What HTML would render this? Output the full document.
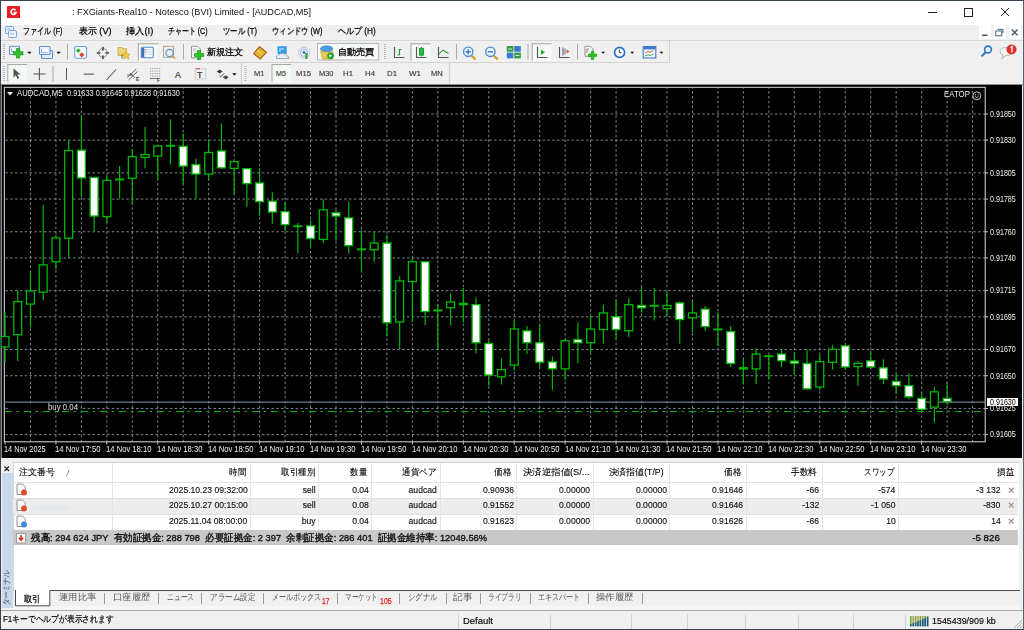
<!DOCTYPE html>
<html><head><meta charset="utf-8"><style>
html,body{margin:0;padding:0;}
body{width:1024px;height:630px;overflow:hidden;position:relative;font-family:"Liberation Sans",sans-serif;background:#f0f0f0}
.t{position:absolute;white-space:nowrap;transform-origin:left center}
</style></head><body>
<div style="position:absolute;left:0px;top:0px;width:1024px;height:630px;background:#f0f0f0"></div><div style="position:absolute;left:0px;top:0px;width:1024px;height:24.5px;background:#fff"></div><svg style="position:absolute;left:7px;top:6px" width="13" height="12"><rect x="0" y="0" width="13" height="12.5" rx="1" fill="#ea1c24"/><path d="M8.6 4.2 A2.6 2.6 0 1 0 9.1 6.6 L6.6 6.6" fill="none" stroke="#fff" stroke-width="1.6"/></svg><div class="t" style="left:72.20px;top:7.40px;font-size:9.8px;line-height:9.8px;color:#111;transform:scaleX(0.932);">: FXGiants-Real10 - Notesco (BVI) Limited - [AUDCAD,M5]</div><div style="position:absolute;left:928px;top:12px;width:9px;height:1px;background:#222"></div><div style="position:absolute;left:964px;top:8px;width:8.5px;height:8.5px;border:1px solid #222;box-sizing:border-box"></div><svg style="position:absolute;left:0;top:0" width="1024" height="30"><path d="M1001 8 L1009 16 M1009 8 L1001 16" stroke="#222" stroke-width="1"/></svg><svg style="position:absolute;left:4px;top:25px" width="14" height="14"><rect x="1.5" y="1.5" width="8" height="7" rx="1" fill="#e4eefa" stroke="#74a6e0"/><rect x="4.5" y="5.5" width="8" height="7" rx="1" fill="#eef4fc" stroke="#74a6e0"/><path d="M3 4h3 M6 9h4" stroke="#8ab4e6" stroke-width="1"/></svg><div class="t" style="left:23.40px;top:27.20px;font-size:9.2px;line-height:9.2px;color:#000;-webkit-text-stroke:0.25px #000;transform:scaleX(0.785);">ファイル (F)</div><div class="t" style="left:78.50px;top:27.20px;font-size:9.2px;line-height:9.2px;color:#000;-webkit-text-stroke:0.25px #000;transform:scaleX(0.990);">表示 (V)</div><div class="t" style="left:126.00px;top:27.20px;font-size:9.2px;line-height:9.2px;color:#000;-webkit-text-stroke:0.25px #000;transform:scaleX(1.024);">挿入(I)</div><div class="t" style="left:168.40px;top:27.20px;font-size:9.2px;line-height:9.2px;color:#000;-webkit-text-stroke:0.25px #000;transform:scaleX(0.772);">チャート (C)</div><div class="t" style="left:222.80px;top:27.20px;font-size:9.2px;line-height:9.2px;color:#000;-webkit-text-stroke:0.25px #000;transform:scaleX(0.823);">ツール (T)</div><div class="t" style="left:272.00px;top:27.20px;font-size:9.2px;line-height:9.2px;color:#000;-webkit-text-stroke:0.25px #000;transform:scaleX(0.808);">ウィンドウ (W)</div><div class="t" style="left:337.50px;top:27.20px;font-size:9.2px;line-height:9.2px;color:#000;-webkit-text-stroke:0.25px #000;transform:scaleX(0.891);">ヘルプ (H)</div><div style="position:absolute;left:978.6px;top:25px;width:12.8px;height:14.3px;background:#fff"></div><div style="position:absolute;left:993.6px;top:25px;width:12.8px;height:14.3px;background:#fff"></div><div style="position:absolute;left:1008.6px;top:25px;width:12.8px;height:14.3px;background:#fff"></div><svg style="position:absolute;left:975px;top:24px" width="49" height="17"><rect x="7" y="10.5" width="5.5" height="1.6" fill="#4a6070"/><rect x="20.8" y="7" width="6" height="4.8" fill="none" stroke="#4a6070" stroke-width="1"/><path d="M22.5 5.3 h5.5 v4" fill="none" stroke="#4a6070" stroke-width="1"/><path d="M36.8 5.5 L42.6 11.3 M42.6 5.5 L36.8 11.3" stroke="#4a6070" stroke-width="1.5"/></svg><div style="position:absolute;left:1px;top:40px;width:1022px;height:1px;background:#d8d8d8"></div><div style="position:absolute;left:1px;top:62px;width:669px;height:1px;background:#d4d4d4"></div><div style="position:absolute;left:1px;top:83.5px;width:1022px;height:1px;background:#8c8c8c"></div><svg style="position:absolute;left:0;top:0" width="1024" height="90" viewBox="0 0 1024 90"><rect x="669" y="41" width="1" height="21.5" fill="#d0d0d0"/><rect x="3" y="44" width="2" height="1" fill="#b8b8b8"/><rect x="3" y="46" width="2" height="1" fill="#b8b8b8"/><rect x="3" y="48" width="2" height="1" fill="#b8b8b8"/><rect x="3" y="50" width="2" height="1" fill="#b8b8b8"/><rect x="3" y="52" width="2" height="1" fill="#b8b8b8"/><rect x="3" y="54" width="2" height="1" fill="#b8b8b8"/><rect x="3" y="56" width="2" height="1" fill="#b8b8b8"/><rect x="3" y="58" width="2" height="1" fill="#b8b8b8"/><rect x="9.5" y="46.3" width="10" height="8.2" rx="1" fill="#eef4fc" stroke="#5b8fd6" stroke-width="1.1"/><path d="M11.5 48.5v3 M11.5 51.5h3" stroke="#7aa0d0" stroke-width="0.8"/><path d="M16.5 48.5h3.2v3.2h3.3v3.2h-3.3v3.2h-3.2v-3.2h-3.2v-3.2h3.2z" fill="#2cc22c" stroke="#139a13" stroke-width="0.7"/><path d="M27.2 51.7h4.2l-2.1 2.2z" fill="#000"/><rect x="41.5" y="50.5" width="11" height="8" rx="1" fill="#e6eef8" stroke="#5b8fd6" stroke-width="1.1"/><rect x="39.5" y="46.5" width="10.5" height="8" rx="1" fill="#f4f8fd" stroke="#5b8fd6" stroke-width="1.1"/><path d="M41.5 48.5v4h6" stroke="#7aa0d0" stroke-width="0.8" fill="none"/><path d="M56.6 51.7h4.2l-2.1 2.2z" fill="#000"/><rect x="67" y="44" width="1" height="15.5" fill="#a8a8a8"/><rect x="74.7" y="46.5" width="11.8" height="11.8" rx="1.5" fill="#fbfcfd" stroke="#6aa0e0" stroke-width="1.1"/><path d="M78.3 48.2l2.4 2.4-2.4 2.4-2.4-2.4z" fill="#2bb52b"/><path d="M81.8 52.2l2.6 2.6-2.6 2.6-2.6-2.6z" fill="#e24a32"/><circle cx="102.9" cy="52.9" r="4.3" fill="none" stroke="#808080" stroke-width="0.9"/><path d="M102.9 46.8v3.6 M102.9 55.4v3.6 M96.8 52.9h3.6 M105.4 52.9h3.6" stroke="#5a5a5a" stroke-width="1.9"/><path d="M118 47.5h4l1 1.2h3.5v6.8h-8.5z" fill="#ecd474" stroke="#c8a840" stroke-width="0.8"/><path d="M126 51.2l1.3 2.7 2.9.3-2.2 1.9.7 2.9-2.7-1.5-2.6 1.5.7-2.9-2.2-1.9 2.9-.3z" fill="#f2d040" stroke="#c09020" stroke-width="0.6"/><rect x="121.5" y="55" width="0.9" height="3.5" fill="#555"/><rect x="137.8" y="43.3" width="20.5" height="17.5" fill="#f5faf5"/><rect x="137.8" y="43.3" width="1" height="17.5" fill="#a0a0a0"/><rect x="137.8" y="43.3" width="20.5" height="1" fill="#a0a0a0"/><rect x="141.3" y="47.3" width="12" height="10.5" rx="1" fill="#fff" stroke="#4d86d4" stroke-width="1.1"/><rect x="141.8" y="48" width="2.5" height="9.3" fill="#3a6fc0"/><path d="M145 49.8h7.5 M145 52h7.5 M145 54.2h7.5" stroke="#b8cce8" stroke-width="0.8"/><circle cx="145.3" cy="49.8" r="0.6" fill="#e04040"/><circle cx="145.3" cy="52" r="0.6" fill="#e04040"/><rect x="163.5" y="46.3" width="10" height="11" fill="#f0f0f0" stroke="#b09a8a" stroke-width="0.9"/><circle cx="169.5" cy="53" r="3.6" fill="#e8f0fa" stroke="#5a90d0" stroke-width="1.1"/><path d="M172 55.6l3.2 3" stroke="#d8a030" stroke-width="1.6"/><rect x="183" y="44" width="1" height="15.5" fill="#a8a8a8"/><path d="M191.5 46.3h6l3 3v8.6h-9z" fill="#f8f8f8" stroke="#8a8a8a" stroke-width="0.9"/><path d="M193 49h3.5 M193 51h5" stroke="#aaa" stroke-width="0.8"/><path d="M197.6 50.5h3v3h3.1v3h-3.1v3.1h-3v-3.1h-3.1v-3h3.1z" fill="#2cc22c" stroke="#139a13" stroke-width="0.7"/><path d="M259.5 46.8l7 5.6-6.4 6.6-6.4-5.6z" fill="#e0b828" stroke="#b05a20" stroke-width="1.1"/><path d="M257.5 50.5l5 4.2" stroke="#f4e090" stroke-width="0.8"/><rect x="277.5" y="46.2" width="9.2" height="7.8" rx="1" fill="#2e9ae8"/><path d="M280 48v4 M281 49h3" stroke="#fff" stroke-width="0.9"/><path d="M276.6 58.5 q-1-3.2 2.3-3.5 q1.5-2.6 4.5-1.3 q3.3-.5 3.6 2.2 q2.2.3 1.8 2.6z" fill="#e6ecf2" stroke="#8a9cb0" stroke-width="0.8"/><circle cx="304" cy="52.8" r="5.6" fill="none" stroke="#b8cde8" stroke-width="1"/><circle cx="304" cy="52.8" r="3.6" fill="none" stroke="#98b8e0" stroke-width="1"/><circle cx="304" cy="52.4" r="1.4" fill="#3070c0"/><rect x="305.3" y="53" width="2.2" height="6" fill="#30a040"/><rect x="317.5" y="43.4" width="61.2" height="16.6" fill="#f6faf6" stroke="#b0b0b0" stroke-width="0.9"/><path d="M320.5 51.5 l6-1.2 6.5 1.2 -1 7.5 h-9.5z" fill="#e8c850" stroke="#c0a030" stroke-width="0.6"/><ellipse cx="326.6" cy="48.7" rx="6.3" ry="2.9" fill="#4a9ee0" stroke="#3a80c0" stroke-width="0.6"/><circle cx="330.6" cy="55.8" r="3.4" fill="#20a030"/><path d="M329.4 54v3.6l2.8-1.8z" fill="#fff"/><rect x="384" y="44" width="2" height="1" fill="#b8b8b8"/><rect x="384" y="46" width="2" height="1" fill="#b8b8b8"/><rect x="384" y="48" width="2" height="1" fill="#b8b8b8"/><rect x="384" y="50" width="2" height="1" fill="#b8b8b8"/><rect x="384" y="52" width="2" height="1" fill="#b8b8b8"/><rect x="384" y="54" width="2" height="1" fill="#b8b8b8"/><rect x="384" y="56" width="2" height="1" fill="#b8b8b8"/><rect x="384" y="58" width="2" height="1" fill="#b8b8b8"/><path d="M394.5 47v10.5h10" fill="none" stroke="#555" stroke-width="1.1"/><path d="M399.5 49v6 M399.5 49.5h2 M399.5 55h-2" stroke="#20a040" stroke-width="1.2" fill="none"/><rect x="410.5" y="43.3" width="20" height="17.5" fill="#f5faf5"/><rect x="410.5" y="43.3" width="1" height="17.5" fill="#a0a0a0"/><rect x="410.5" y="43.3" width="20" height="1" fill="#a0a0a0"/><path d="M416.5 47v10.5h10" fill="none" stroke="#555" stroke-width="1.1"/><rect x="419.5" y="48.2" width="4" height="7" fill="#20c040" stroke="#10902a" stroke-width="0.8"/><path d="M421.5 46.8v1.4 M421.5 55.2v1.4" stroke="#10902a" stroke-width="0.8"/><path d="M438.5 47v10.5h10" fill="none" stroke="#555" stroke-width="1.1"/><path d="M439 53.8 l4-3.6 5.5 3.2" fill="none" stroke="#30a040" stroke-width="1.1"/><rect x="456" y="44" width="1" height="15.5" fill="#a8a8a8"/><path d="M471.4 55.6l4.2 3.8" stroke="#d4a030" stroke-width="2.2"/><circle cx="468.2" cy="51.8" r="4.7" fill="#e8f2fc" stroke="#4a88d8" stroke-width="1.3"/><path d="M465.59999999999997 51.8h5.2" stroke="#3a78c8" stroke-width="1.4"/><path d="M468.2 49.2v5.2" stroke="#3a78c8" stroke-width="1.4"/><path d="M493.59999999999997 55.6l4.2 3.8" stroke="#d4a030" stroke-width="2.2"/><circle cx="490.4" cy="51.8" r="4.7" fill="#e8f2fc" stroke="#4a88d8" stroke-width="1.3"/><path d="M487.79999999999995 51.8h5.2" stroke="#3a78c8" stroke-width="1.4"/><rect x="506.8" y="46" width="6.6" height="5.8" fill="#3d9a40"/><rect x="514.2" y="46" width="6.6" height="5.8" fill="#3a7ad0"/><rect x="506.8" y="52.6" width="6.6" height="5.8" fill="#3a7ad0"/><rect x="514.2" y="52.6" width="6.6" height="5.8" fill="#3d9a40"/><path d="M508 49h4 M515.5 55.5h4" stroke="#cfe" stroke-width="0.9"/><rect x="527.5" y="44" width="1" height="15.5" fill="#a8a8a8"/><rect x="531.7" y="43.3" width="19.8" height="17.5" fill="#f5faf5"/><rect x="531.7" y="43.3" width="1" height="17.5" fill="#a0a0a0"/><rect x="531.7" y="43.3" width="19.8" height="1" fill="#a0a0a0"/><path d="M537.5 47v10.5h10" fill="none" stroke="#555" stroke-width="1.1"/><path d="M541 49.5v5.5l4-2.75z" fill="#20b040"/><path d="M559.5 47v10.5h10" fill="none" stroke="#555" stroke-width="1.1"/><path d="M563 47.5v8" stroke="#555" stroke-width="1"/><path d="M565 48.5v6" stroke="#4080d0" stroke-width="1"/><path d="M569.5 51.5l-3-2v4z" fill="#e05020"/><rect x="577" y="44" width="1" height="15.5" fill="#a8a8a8"/><path d="M585 46.3h5.5l2.5 2.5v7.5h-8z" fill="#f8f8f8" stroke="#888" stroke-width="0.9"/><path d="M587 49v4 M587 49h2" stroke="#666" stroke-width="0.8"/><path d="M591.2 51.3h2.6v2.7h2.8v2.6h-2.8v2.8h-2.6v-2.8h-2.8v-2.6h2.8z" fill="#2cc22c" stroke="#139a13" stroke-width="0.6"/><path d="M601.3 51.7h3.6l-1.8 2z" fill="#000"/><circle cx="619.6" cy="52.4" r="5.8" fill="#2870c8"/><circle cx="619.6" cy="52.4" r="4.2" fill="#f4f8fc"/><path d="M619.4 49.5v3.2h2.2" stroke="#333" stroke-width="0.8" fill="none"/><path d="M630.4 51.7h3.6l-1.8 2z" fill="#000"/><rect x="643.2" y="46.5" width="12.6" height="11.5" fill="#f0f6fc" stroke="#3a7ac8" stroke-width="1.1"/><rect x="643.7" y="47" width="11.6" height="2.4" fill="#3a7ac8"/><path d="M645 53l3-1.5 2 1 3.5-2" stroke="#d06030" stroke-width="0.9" fill="none"/><path d="M645 56l3-1.2 2 .8 3.5-1.6" stroke="#40a040" stroke-width="0.9" fill="none"/><path d="M659.6 51.7h3.6l-1.8 2z" fill="#000"/><circle cx="988" cy="49.5" r="3.4" fill="#eaf2fb" stroke="#2e74c8" stroke-width="1.6"/><path d="M985.8 52l-4.2 4.4" stroke="#2e74c8" stroke-width="2"/><path d="M1000 51.5 q0-4 6-4 q6 0 6 4 q0 4-6 4 l-4 3 1-3.4 q-3-1-3-3.6z" fill="#f4f4f4" stroke="#b0b0b0" stroke-width="0.9"/><circle cx="1011.5" cy="49.5" r="5" fill="#e0302a"/><path d="M1010.6 47.6l1.4-1v6" stroke="#fff" stroke-width="1.3" fill="none"/><rect x="3" y="66" width="2" height="1" fill="#b8b8b8"/><rect x="3" y="68" width="2" height="1" fill="#b8b8b8"/><rect x="3" y="70" width="2" height="1" fill="#b8b8b8"/><rect x="3" y="72" width="2" height="1" fill="#b8b8b8"/><rect x="3" y="74" width="2" height="1" fill="#b8b8b8"/><rect x="3" y="76" width="2" height="1" fill="#b8b8b8"/><rect x="3" y="78" width="2" height="1" fill="#b8b8b8"/><rect x="3" y="80" width="2" height="1" fill="#b8b8b8"/><rect x="7.3" y="64" width="19.7" height="18" fill="#f3f9f3"/><rect x="7.3" y="64" width="1" height="18" fill="#a8a8a8"/><rect x="7.3" y="64" width="19.7" height="1" fill="#a8a8a8"/><path d="M13.5 68.5v9l2.3-2.2 1.8 3.6 1.6-.8-1.8-3.5 3.2-.2z" fill="#555"/><path d="M39.4 68v12 M33.5 74h12" stroke="#555" stroke-width="1.1"/><rect x="52.5" y="66" width="1" height="16" fill="#a8a8a8"/><rect x="66" y="68" width="1" height="12" fill="#555"/><rect x="83.7" y="73.6" width="10" height="1.1" fill="#555"/><path d="M106.5 80l9.5-10.5" stroke="#555" stroke-width="1.1"/><path d="M127.3 77.5l9-8.5 M128.5 80l9-8.5 M130 73l5 5 M127 75h6" stroke="#555" stroke-width="0.9"/><text x="136" y="81" font-size="5" font-weight="bold" fill="#444" font-family="Liberation Sans">E</text><path d="M150 68.5h11 M150 71h11 M150 73.5h11 M150 76h11" stroke="#777" stroke-width="0.7" stroke-dasharray="1 0.8"/><path d="M150 78.5h8" stroke="#555" stroke-width="0.8"/><text x="157" y="81.5" font-size="5" font-weight="bold" fill="#444" font-family="Liberation Sans">F</text><text x="174.5" y="78.2" font-size="9.5" font-weight="bold" fill="#606060" font-family="Liberation Sans">A</text><rect x="195.2" y="68.8" width="10.5" height="10.2" fill="none" stroke="#999" stroke-width="0.8" stroke-dasharray="1 1"/><text x="197.1" y="77.8" font-size="9" font-weight="bold" fill="#505050" font-family="Liberation Sans">T</text><rect x="196" y="68.3" width="4" height="1" fill="#d04020"/><path d="M219.7 69.4l3 2 -3 2 -3-2z" fill="#3a3a3a"/><path d="M225.7 75.2l3 2 -3 2.2 -3-2.2z" fill="#4a4a4a"/><path d="M219.3 75.8l1.4 1.2 3.4-3.6" stroke="#555" stroke-width="1" fill="none"/><path d="M232.2 73.2h4.4l-2.2 2.4z" fill="#000"/><rect x="241" y="63" width="1" height="21" fill="#d0d0d0"/><rect x="244.5" y="66" width="2" height="1" fill="#b8b8b8"/><rect x="244.5" y="68" width="2" height="1" fill="#b8b8b8"/><rect x="244.5" y="70" width="2" height="1" fill="#b8b8b8"/><rect x="244.5" y="72" width="2" height="1" fill="#b8b8b8"/><rect x="244.5" y="74" width="2" height="1" fill="#b8b8b8"/><rect x="244.5" y="76" width="2" height="1" fill="#b8b8b8"/><rect x="244.5" y="78" width="2" height="1" fill="#b8b8b8"/><rect x="244.5" y="80" width="2" height="1" fill="#b8b8b8"/><rect x="271.5" y="64" width="19.5" height="18" fill="#f3f9f3"/><rect x="271.5" y="64" width="1" height="18" fill="#a8a8a8"/><rect x="271.5" y="64" width="19.5" height="1" fill="#a8a8a8"/><rect x="449" y="63" width="1" height="21" fill="#d0d0d0"/></svg><div class="t" style="left:206.70px;top:46.90px;font-size:9.4px;line-height:9.4px;color:#000;-webkit-text-stroke:0.3px #000;transform:scaleX(1.014);">新規注文</div><div class="t" style="left:338.00px;top:46.90px;font-size:9.4px;line-height:9.4px;color:#000;-webkit-text-stroke:0.3px #000;transform:scaleX(1.011);">自動売買</div><div class="t" style="left:253.70px;top:70.30px;font-size:7.8px;line-height:7.8px;color:#3a3a3a;-webkit-text-stroke:0.15px #3a3a3a;transform:scaleX(0.968);">M1</div><div class="t" style="left:276.00px;top:70.30px;font-size:7.8px;line-height:7.8px;color:#3a3a3a;-webkit-text-stroke:0.15px #3a3a3a;transform:scaleX(0.922);">M5</div><div class="t" style="left:296.00px;top:70.30px;font-size:7.8px;line-height:7.8px;color:#3a3a3a;-webkit-text-stroke:0.15px #3a3a3a;transform:scaleX(0.989);">M15</div><div class="t" style="left:318.50px;top:70.30px;font-size:7.8px;line-height:7.8px;color:#3a3a3a;-webkit-text-stroke:0.15px #3a3a3a;transform:scaleX(0.956);">M30</div><div class="t" style="left:343.00px;top:70.30px;font-size:7.8px;line-height:7.8px;color:#3a3a3a;-webkit-text-stroke:0.15px #3a3a3a;transform:scaleX(1.003);">H1</div><div class="t" style="left:364.70px;top:70.30px;font-size:7.8px;line-height:7.8px;color:#3a3a3a;-webkit-text-stroke:0.15px #3a3a3a;transform:scaleX(1.003);">H4</div><div class="t" style="left:387.20px;top:70.30px;font-size:7.8px;line-height:7.8px;color:#3a3a3a;-webkit-text-stroke:0.15px #3a3a3a;transform:scaleX(1.003);">D1</div><div class="t" style="left:409.00px;top:70.30px;font-size:7.8px;line-height:7.8px;color:#3a3a3a;-webkit-text-stroke:0.15px #3a3a3a;transform:scaleX(1.025);">W1</div><div class="t" style="left:430.50px;top:70.30px;font-size:7.8px;line-height:7.8px;color:#3a3a3a;-webkit-text-stroke:0.15px #3a3a3a;transform:scaleX(0.964);">MN</div><div style="position:absolute;left:1px;top:84.5px;width:1020.5px;height:373.5px;background:#000"></div><div style="position:absolute;left:1px;top:84.5px;width:1px;height:373.5px;background:#8a8a8a"></div><svg style="position:absolute;left:0;top:0" width="1024" height="630" viewBox="0 0 1024 630"><line x1="30.46" y1="88" x2="30.46" y2="441.5" stroke="#8795a3" stroke-width="0.9" stroke-dasharray="2.5 2.34" stroke-dashoffset="1.7"/><line x1="55.92" y1="88" x2="55.92" y2="441.5" stroke="#8795a3" stroke-width="0.9" stroke-dasharray="2.5 2.34" stroke-dashoffset="1.7"/><line x1="81.39" y1="88" x2="81.39" y2="441.5" stroke="#8795a3" stroke-width="0.9" stroke-dasharray="2.5 2.34" stroke-dashoffset="1.7"/><line x1="106.85" y1="88" x2="106.85" y2="441.5" stroke="#8795a3" stroke-width="0.9" stroke-dasharray="2.5 2.34" stroke-dashoffset="1.7"/><line x1="132.31" y1="88" x2="132.31" y2="441.5" stroke="#8795a3" stroke-width="0.9" stroke-dasharray="2.5 2.34" stroke-dashoffset="1.7"/><line x1="157.77" y1="88" x2="157.77" y2="441.5" stroke="#8795a3" stroke-width="0.9" stroke-dasharray="2.5 2.34" stroke-dashoffset="1.7"/><line x1="183.23" y1="88" x2="183.23" y2="441.5" stroke="#8795a3" stroke-width="0.9" stroke-dasharray="2.5 2.34" stroke-dashoffset="1.7"/><line x1="208.70" y1="88" x2="208.70" y2="441.5" stroke="#8795a3" stroke-width="0.9" stroke-dasharray="2.5 2.34" stroke-dashoffset="1.7"/><line x1="234.16" y1="88" x2="234.16" y2="441.5" stroke="#8795a3" stroke-width="0.9" stroke-dasharray="2.5 2.34" stroke-dashoffset="1.7"/><line x1="259.62" y1="88" x2="259.62" y2="441.5" stroke="#8795a3" stroke-width="0.9" stroke-dasharray="2.5 2.34" stroke-dashoffset="1.7"/><line x1="285.08" y1="88" x2="285.08" y2="441.5" stroke="#8795a3" stroke-width="0.9" stroke-dasharray="2.5 2.34" stroke-dashoffset="1.7"/><line x1="310.54" y1="88" x2="310.54" y2="441.5" stroke="#8795a3" stroke-width="0.9" stroke-dasharray="2.5 2.34" stroke-dashoffset="1.7"/><line x1="336.01" y1="88" x2="336.01" y2="441.5" stroke="#8795a3" stroke-width="0.9" stroke-dasharray="2.5 2.34" stroke-dashoffset="1.7"/><line x1="361.47" y1="88" x2="361.47" y2="441.5" stroke="#8795a3" stroke-width="0.9" stroke-dasharray="2.5 2.34" stroke-dashoffset="1.7"/><line x1="386.93" y1="88" x2="386.93" y2="441.5" stroke="#8795a3" stroke-width="0.9" stroke-dasharray="2.5 2.34" stroke-dashoffset="1.7"/><line x1="412.39" y1="88" x2="412.39" y2="441.5" stroke="#8795a3" stroke-width="0.9" stroke-dasharray="2.5 2.34" stroke-dashoffset="1.7"/><line x1="437.85" y1="88" x2="437.85" y2="441.5" stroke="#8795a3" stroke-width="0.9" stroke-dasharray="2.5 2.34" stroke-dashoffset="1.7"/><line x1="463.32" y1="88" x2="463.32" y2="441.5" stroke="#8795a3" stroke-width="0.9" stroke-dasharray="2.5 2.34" stroke-dashoffset="1.7"/><line x1="488.78" y1="88" x2="488.78" y2="441.5" stroke="#8795a3" stroke-width="0.9" stroke-dasharray="2.5 2.34" stroke-dashoffset="1.7"/><line x1="514.24" y1="88" x2="514.24" y2="441.5" stroke="#8795a3" stroke-width="0.9" stroke-dasharray="2.5 2.34" stroke-dashoffset="1.7"/><line x1="539.70" y1="88" x2="539.70" y2="441.5" stroke="#8795a3" stroke-width="0.9" stroke-dasharray="2.5 2.34" stroke-dashoffset="1.7"/><line x1="565.16" y1="88" x2="565.16" y2="441.5" stroke="#8795a3" stroke-width="0.9" stroke-dasharray="2.5 2.34" stroke-dashoffset="1.7"/><line x1="590.63" y1="88" x2="590.63" y2="441.5" stroke="#8795a3" stroke-width="0.9" stroke-dasharray="2.5 2.34" stroke-dashoffset="1.7"/><line x1="616.09" y1="88" x2="616.09" y2="441.5" stroke="#8795a3" stroke-width="0.9" stroke-dasharray="2.5 2.34" stroke-dashoffset="1.7"/><line x1="641.55" y1="88" x2="641.55" y2="441.5" stroke="#8795a3" stroke-width="0.9" stroke-dasharray="2.5 2.34" stroke-dashoffset="1.7"/><line x1="667.01" y1="88" x2="667.01" y2="441.5" stroke="#8795a3" stroke-width="0.9" stroke-dasharray="2.5 2.34" stroke-dashoffset="1.7"/><line x1="692.47" y1="88" x2="692.47" y2="441.5" stroke="#8795a3" stroke-width="0.9" stroke-dasharray="2.5 2.34" stroke-dashoffset="1.7"/><line x1="717.94" y1="88" x2="717.94" y2="441.5" stroke="#8795a3" stroke-width="0.9" stroke-dasharray="2.5 2.34" stroke-dashoffset="1.7"/><line x1="743.40" y1="88" x2="743.40" y2="441.5" stroke="#8795a3" stroke-width="0.9" stroke-dasharray="2.5 2.34" stroke-dashoffset="1.7"/><line x1="768.86" y1="88" x2="768.86" y2="441.5" stroke="#8795a3" stroke-width="0.9" stroke-dasharray="2.5 2.34" stroke-dashoffset="1.7"/><line x1="794.32" y1="88" x2="794.32" y2="441.5" stroke="#8795a3" stroke-width="0.9" stroke-dasharray="2.5 2.34" stroke-dashoffset="1.7"/><line x1="819.78" y1="88" x2="819.78" y2="441.5" stroke="#8795a3" stroke-width="0.9" stroke-dasharray="2.5 2.34" stroke-dashoffset="1.7"/><line x1="845.25" y1="88" x2="845.25" y2="441.5" stroke="#8795a3" stroke-width="0.9" stroke-dasharray="2.5 2.34" stroke-dashoffset="1.7"/><line x1="870.71" y1="88" x2="870.71" y2="441.5" stroke="#8795a3" stroke-width="0.9" stroke-dasharray="2.5 2.34" stroke-dashoffset="1.7"/><line x1="896.17" y1="88" x2="896.17" y2="441.5" stroke="#8795a3" stroke-width="0.9" stroke-dasharray="2.5 2.34" stroke-dashoffset="1.7"/><line x1="921.63" y1="88" x2="921.63" y2="441.5" stroke="#8795a3" stroke-width="0.9" stroke-dasharray="2.5 2.34" stroke-dashoffset="1.7"/><line x1="947.09" y1="88" x2="947.09" y2="441.5" stroke="#8795a3" stroke-width="0.9" stroke-dasharray="2.5 2.34" stroke-dashoffset="1.7"/><line x1="972.56" y1="88" x2="972.56" y2="441.5" stroke="#8795a3" stroke-width="0.9" stroke-dasharray="2.5 2.34" stroke-dashoffset="1.7"/><line x1="4.5" y1="114.00" x2="985" y2="114.00" stroke="#8795a3" stroke-width="0.9" stroke-dasharray="2.5 2.34" stroke-dashoffset="-0.8"/><line x1="4.5" y1="140.17" x2="985" y2="140.17" stroke="#8795a3" stroke-width="0.9" stroke-dasharray="2.5 2.34" stroke-dashoffset="-0.8"/><line x1="4.5" y1="172.89" x2="985" y2="172.89" stroke="#8795a3" stroke-width="0.9" stroke-dasharray="2.5 2.34" stroke-dashoffset="-0.8"/><line x1="4.5" y1="199.06" x2="985" y2="199.06" stroke="#8795a3" stroke-width="0.9" stroke-dasharray="2.5 2.34" stroke-dashoffset="-0.8"/><line x1="4.5" y1="231.77" x2="985" y2="231.77" stroke="#8795a3" stroke-width="0.9" stroke-dasharray="2.5 2.34" stroke-dashoffset="-0.8"/><line x1="4.5" y1="257.95" x2="985" y2="257.95" stroke="#8795a3" stroke-width="0.9" stroke-dasharray="2.5 2.34" stroke-dashoffset="-0.8"/><line x1="4.5" y1="290.66" x2="985" y2="290.66" stroke="#8795a3" stroke-width="0.9" stroke-dasharray="2.5 2.34" stroke-dashoffset="-0.8"/><line x1="4.5" y1="316.83" x2="985" y2="316.83" stroke="#8795a3" stroke-width="0.9" stroke-dasharray="2.5 2.34" stroke-dashoffset="-0.8"/><line x1="4.5" y1="349.55" x2="985" y2="349.55" stroke="#8795a3" stroke-width="0.9" stroke-dasharray="2.5 2.34" stroke-dashoffset="-0.8"/><line x1="4.5" y1="375.72" x2="985" y2="375.72" stroke="#8795a3" stroke-width="0.9" stroke-dasharray="2.5 2.34" stroke-dashoffset="-0.8"/><line x1="4.5" y1="408.44" x2="985" y2="408.44" stroke="#8795a3" stroke-width="0.9" stroke-dasharray="2.5 2.34" stroke-dashoffset="-0.8"/><line x1="4.5" y1="434.61" x2="985" y2="434.61" stroke="#8795a3" stroke-width="0.9" stroke-dasharray="2.5 2.34" stroke-dashoffset="-0.8"/><rect x="4.3" y="87.3" width="980.9" height="354.5" fill="none" stroke="#dcdcdc" stroke-width="1"/><line x1="4.5" y1="402.1" x2="985" y2="402.1" stroke="#6f7c8a" stroke-width="1.25"/><rect x="8" y="404.2" width="72" height="6.2" fill="#000"/><line x1="4.9" y1="411.5" x2="985" y2="411.5" stroke="#00b400" stroke-width="1.2" stroke-dasharray="7 4.7 2.5 4.8"/><line x1="5.00" y1="311.7" x2="5.00" y2="362.0" stroke="#00b800" stroke-width="1.2"/><rect x="1.05" y="336.55" width="7.90" height="10.40" fill="#000" stroke="#00b800" stroke-width="1.3"/><line x1="17.73" y1="290.5" x2="17.73" y2="361.3" stroke="#00b800" stroke-width="1.2"/><rect x="13.78" y="301.65" width="7.90" height="33.10" fill="#000" stroke="#00b800" stroke-width="1.3"/><line x1="30.46" y1="271.1" x2="30.46" y2="327.2" stroke="#00b800" stroke-width="1.2"/><rect x="26.51" y="290.95" width="7.90" height="13.10" fill="#000" stroke="#00b800" stroke-width="1.3"/><line x1="43.19" y1="204.7" x2="43.19" y2="300.5" stroke="#00b800" stroke-width="1.2"/><rect x="39.24" y="264.85" width="7.90" height="27.30" fill="#000" stroke="#00b800" stroke-width="1.3"/><line x1="55.92" y1="234.7" x2="55.92" y2="269.4" stroke="#00b800" stroke-width="1.2"/><rect x="51.97" y="237.85" width="7.90" height="23.90" fill="#000" stroke="#00b800" stroke-width="1.3"/><line x1="68.66" y1="139.9" x2="68.66" y2="257.9" stroke="#00b800" stroke-width="1.2"/><rect x="64.71" y="150.55" width="7.90" height="87.70" fill="#000" stroke="#00b800" stroke-width="1.3"/><line x1="81.39" y1="115.5" x2="81.39" y2="197.3" stroke="#00b800" stroke-width="1.2"/><rect x="77.44" y="150.15" width="7.90" height="27.80" fill="#fff" stroke="#00b800" stroke-width="1.3"/><line x1="94.12" y1="176.8" x2="94.12" y2="231.0" stroke="#00b800" stroke-width="1.2"/><rect x="90.17" y="177.45" width="7.90" height="38.60" fill="#fff" stroke="#00b800" stroke-width="1.3"/><line x1="106.85" y1="176.0" x2="106.85" y2="223.0" stroke="#00b800" stroke-width="1.2"/><rect x="102.90" y="180.45" width="7.90" height="36.10" fill="#000" stroke="#00b800" stroke-width="1.3"/><line x1="119.58" y1="166.0" x2="119.58" y2="198.5" stroke="#00b800" stroke-width="1.2"/><rect x="114.98" y="178.5" width="9.2" height="2.00" fill="#00b800"/><line x1="132.31" y1="149.0" x2="132.31" y2="203.3" stroke="#00b800" stroke-width="1.2"/><rect x="128.36" y="156.65" width="7.90" height="21.60" fill="#000" stroke="#00b800" stroke-width="1.3"/><line x1="145.04" y1="126.9" x2="145.04" y2="168.5" stroke="#00b800" stroke-width="1.2"/><rect x="141.09" y="154.65" width="7.90" height="2.70" fill="#000" stroke="#00b800" stroke-width="1.3"/><line x1="157.77" y1="145.3" x2="157.77" y2="179.2" stroke="#00b800" stroke-width="1.2"/><rect x="153.82" y="145.95" width="7.90" height="10.20" fill="#000" stroke="#00b800" stroke-width="1.3"/><line x1="170.50" y1="119.2" x2="170.50" y2="164.7" stroke="#00b800" stroke-width="1.2"/><rect x="165.90" y="144.8" width="9.2" height="2.00" fill="#00b800"/><line x1="183.23" y1="133.6" x2="183.23" y2="184.2" stroke="#00b800" stroke-width="1.2"/><rect x="179.28" y="146.25" width="7.90" height="19.80" fill="#fff" stroke="#00b800" stroke-width="1.3"/><line x1="195.97" y1="158.5" x2="195.97" y2="198.4" stroke="#00b800" stroke-width="1.2"/><rect x="192.02" y="164.65" width="7.90" height="9.40" fill="#fff" stroke="#00b800" stroke-width="1.3"/><line x1="208.70" y1="141.1" x2="208.70" y2="179.2" stroke="#00b800" stroke-width="1.2"/><rect x="204.75" y="152.45" width="7.90" height="21.60" fill="#000" stroke="#00b800" stroke-width="1.3"/><line x1="221.43" y1="123.2" x2="221.43" y2="168.5" stroke="#00b800" stroke-width="1.2"/><rect x="217.48" y="150.95" width="7.90" height="16.90" fill="#fff" stroke="#00b800" stroke-width="1.3"/><line x1="234.16" y1="161.0" x2="234.16" y2="194.6" stroke="#00b800" stroke-width="1.2"/><rect x="230.21" y="161.65" width="7.90" height="6.70" fill="#000" stroke="#00b800" stroke-width="1.3"/><line x1="246.89" y1="168.0" x2="246.89" y2="206.7" stroke="#00b800" stroke-width="1.2"/><rect x="242.94" y="168.65" width="7.90" height="15.00" fill="#fff" stroke="#00b800" stroke-width="1.3"/><line x1="259.62" y1="168.6" x2="259.62" y2="215.4" stroke="#00b800" stroke-width="1.2"/><rect x="255.67" y="182.95" width="7.90" height="18.70" fill="#fff" stroke="#00b800" stroke-width="1.3"/><line x1="272.35" y1="192.3" x2="272.35" y2="223.4" stroke="#00b800" stroke-width="1.2"/><rect x="268.40" y="201.15" width="7.90" height="10.90" fill="#fff" stroke="#00b800" stroke-width="1.3"/><line x1="285.08" y1="201.8" x2="285.08" y2="230.9" stroke="#00b800" stroke-width="1.2"/><rect x="281.13" y="211.65" width="7.90" height="13.10" fill="#fff" stroke="#00b800" stroke-width="1.3"/><line x1="297.81" y1="222.9" x2="297.81" y2="253.3" stroke="#00b800" stroke-width="1.2"/><rect x="293.21" y="225.2" width="9.2" height="2.00" fill="#00b800"/><line x1="310.54" y1="220.2" x2="310.54" y2="247.6" stroke="#00b800" stroke-width="1.2"/><rect x="306.59" y="225.85" width="7.90" height="12.60" fill="#fff" stroke="#00b800" stroke-width="1.3"/><line x1="323.27" y1="199.0" x2="323.27" y2="243.3" stroke="#00b800" stroke-width="1.2"/><rect x="319.32" y="209.85" width="7.90" height="29.60" fill="#000" stroke="#00b800" stroke-width="1.3"/><line x1="336.01" y1="209.7" x2="336.01" y2="240.8" stroke="#00b800" stroke-width="1.2"/><rect x="332.06" y="212.85" width="7.90" height="3.20" fill="#fff" stroke="#00b800" stroke-width="1.3"/><line x1="348.74" y1="201.8" x2="348.74" y2="253.8" stroke="#00b800" stroke-width="1.2"/><rect x="344.79" y="217.85" width="7.90" height="27.80" fill="#fff" stroke="#00b800" stroke-width="1.3"/><line x1="361.47" y1="230.3" x2="361.47" y2="271.8" stroke="#00b800" stroke-width="1.2"/><rect x="356.87" y="248.4" width="9.2" height="2.00" fill="#00b800"/><line x1="374.20" y1="231.7" x2="374.20" y2="261.6" stroke="#00b800" stroke-width="1.2"/><rect x="370.25" y="243.05" width="7.90" height="6.70" fill="#000" stroke="#00b800" stroke-width="1.3"/><line x1="386.93" y1="235.0" x2="386.93" y2="336.3" stroke="#00b800" stroke-width="1.2"/><rect x="382.98" y="243.05" width="7.90" height="79.70" fill="#fff" stroke="#00b800" stroke-width="1.3"/><line x1="399.66" y1="276.0" x2="399.66" y2="349.5" stroke="#00b800" stroke-width="1.2"/><rect x="395.71" y="280.95" width="7.90" height="41.00" fill="#000" stroke="#00b800" stroke-width="1.3"/><line x1="412.39" y1="257.4" x2="412.39" y2="322.1" stroke="#00b800" stroke-width="1.2"/><rect x="408.44" y="261.75" width="7.90" height="19.90" fill="#000" stroke="#00b800" stroke-width="1.3"/><line x1="425.12" y1="261.1" x2="425.12" y2="325.3" stroke="#00b800" stroke-width="1.2"/><rect x="421.17" y="261.75" width="7.90" height="49.80" fill="#fff" stroke="#00b800" stroke-width="1.3"/><line x1="437.85" y1="304.7" x2="437.85" y2="349.5" stroke="#00b800" stroke-width="1.2"/><rect x="433.25" y="309.4" width="9.2" height="2.00" fill="#00b800"/><line x1="450.58" y1="293.5" x2="450.58" y2="325.3" stroke="#00b800" stroke-width="1.2"/><rect x="446.63" y="302.05" width="7.90" height="5.70" fill="#000" stroke="#00b800" stroke-width="1.3"/><line x1="463.32" y1="288.0" x2="463.32" y2="322.6" stroke="#00b800" stroke-width="1.2"/><rect x="459.37" y="303.35" width="7.90" height="1.20" fill="#fff" stroke="#00b800" stroke-width="1.3"/><line x1="476.05" y1="297.2" x2="476.05" y2="353.5" stroke="#00b800" stroke-width="1.2"/><rect x="472.10" y="304.65" width="7.90" height="38.10" fill="#fff" stroke="#00b800" stroke-width="1.3"/><line x1="488.78" y1="340.1" x2="488.78" y2="385.7" stroke="#00b800" stroke-width="1.2"/><rect x="484.83" y="343.55" width="7.90" height="31.50" fill="#fff" stroke="#00b800" stroke-width="1.3"/><line x1="501.51" y1="358.3" x2="501.51" y2="384.5" stroke="#00b800" stroke-width="1.2"/><rect x="497.56" y="369.65" width="7.90" height="7.20" fill="#000" stroke="#00b800" stroke-width="1.3"/><line x1="514.24" y1="320.5" x2="514.24" y2="370.8" stroke="#00b800" stroke-width="1.2"/><rect x="510.29" y="329.05" width="7.90" height="36.10" fill="#000" stroke="#00b800" stroke-width="1.3"/><line x1="526.97" y1="326.0" x2="526.97" y2="354.1" stroke="#00b800" stroke-width="1.2"/><rect x="523.02" y="330.85" width="7.90" height="11.90" fill="#fff" stroke="#00b800" stroke-width="1.3"/><line x1="539.70" y1="324.2" x2="539.70" y2="367.0" stroke="#00b800" stroke-width="1.2"/><rect x="535.75" y="342.75" width="7.90" height="19.40" fill="#fff" stroke="#00b800" stroke-width="1.3"/><line x1="552.43" y1="356.6" x2="552.43" y2="390.0" stroke="#00b800" stroke-width="1.2"/><rect x="548.48" y="361.95" width="7.90" height="6.90" fill="#fff" stroke="#00b800" stroke-width="1.3"/><line x1="565.16" y1="338.4" x2="565.16" y2="380.0" stroke="#00b800" stroke-width="1.2"/><rect x="561.21" y="340.75" width="7.90" height="28.10" fill="#000" stroke="#00b800" stroke-width="1.3"/><line x1="577.89" y1="322.2" x2="577.89" y2="363.3" stroke="#00b800" stroke-width="1.2"/><rect x="573.94" y="339.55" width="7.90" height="3.20" fill="#fff" stroke="#00b800" stroke-width="1.3"/><line x1="590.63" y1="316.0" x2="590.63" y2="352.3" stroke="#00b800" stroke-width="1.2"/><rect x="586.68" y="329.05" width="7.90" height="13.70" fill="#000" stroke="#00b800" stroke-width="1.3"/><line x1="603.36" y1="304.8" x2="603.36" y2="343.4" stroke="#00b800" stroke-width="1.2"/><rect x="599.41" y="312.95" width="7.90" height="16.60" fill="#000" stroke="#00b800" stroke-width="1.3"/><line x1="616.09" y1="299.8" x2="616.09" y2="338.4" stroke="#00b800" stroke-width="1.2"/><rect x="612.14" y="316.65" width="7.90" height="12.90" fill="#fff" stroke="#00b800" stroke-width="1.3"/><line x1="628.82" y1="298.0" x2="628.82" y2="337.2" stroke="#00b800" stroke-width="1.2"/><rect x="624.87" y="304.65" width="7.90" height="26.10" fill="#000" stroke="#00b800" stroke-width="1.3"/><line x1="641.55" y1="286.6" x2="641.55" y2="312.7" stroke="#00b800" stroke-width="1.2"/><rect x="637.60" y="305.45" width="7.90" height="2.40" fill="#fff" stroke="#00b800" stroke-width="1.3"/><line x1="654.28" y1="287.8" x2="654.28" y2="320.5" stroke="#00b800" stroke-width="1.2"/><rect x="649.68" y="304.8" width="9.2" height="2.00" fill="#00b800"/><line x1="667.01" y1="291.8" x2="667.01" y2="316.7" stroke="#00b800" stroke-width="1.2"/><rect x="663.06" y="305.45" width="7.90" height="3.20" fill="#000" stroke="#00b800" stroke-width="1.3"/><line x1="679.74" y1="301.5" x2="679.74" y2="343.4" stroke="#00b800" stroke-width="1.2"/><rect x="675.79" y="302.95" width="7.90" height="16.60" fill="#fff" stroke="#00b800" stroke-width="1.3"/><line x1="692.47" y1="301.0" x2="692.47" y2="332.2" stroke="#00b800" stroke-width="1.2"/><rect x="688.52" y="312.95" width="7.90" height="4.90" fill="#000" stroke="#00b800" stroke-width="1.3"/><line x1="705.21" y1="306.0" x2="705.21" y2="331.0" stroke="#00b800" stroke-width="1.2"/><rect x="701.25" y="309.15" width="7.90" height="17.40" fill="#fff" stroke="#00b800" stroke-width="1.3"/><line x1="717.94" y1="312.3" x2="717.94" y2="345.9" stroke="#00b800" stroke-width="1.2"/><rect x="713.34" y="328.5" width="9.2" height="2.00" fill="#00b800"/><line x1="730.67" y1="326.0" x2="730.67" y2="367.1" stroke="#00b800" stroke-width="1.2"/><rect x="726.72" y="331.65" width="7.90" height="31.80" fill="#fff" stroke="#00b800" stroke-width="1.3"/><line x1="743.40" y1="359.1" x2="743.40" y2="384.5" stroke="#00b800" stroke-width="1.2"/><rect x="739.45" y="367.75" width="7.90" height="1.20" fill="#fff" stroke="#00b800" stroke-width="1.3"/><line x1="756.13" y1="348.4" x2="756.13" y2="384.0" stroke="#00b800" stroke-width="1.2"/><rect x="752.18" y="354.05" width="7.90" height="14.90" fill="#000" stroke="#00b800" stroke-width="1.3"/><line x1="768.86" y1="355.0" x2="768.86" y2="379.6" stroke="#00b800" stroke-width="1.2"/><rect x="764.26" y="355.2" width="9.2" height="2.00" fill="#00b800"/><line x1="781.59" y1="349.7" x2="781.59" y2="367.1" stroke="#00b800" stroke-width="1.2"/><rect x="777.64" y="354.05" width="7.90" height="6.70" fill="#fff" stroke="#00b800" stroke-width="1.3"/><line x1="794.32" y1="352.2" x2="794.32" y2="374.6" stroke="#00b800" stroke-width="1.2"/><rect x="790.37" y="361.05" width="7.90" height="2.20" fill="#fff" stroke="#00b800" stroke-width="1.3"/><line x1="807.05" y1="349.2" x2="807.05" y2="389.5" stroke="#00b800" stroke-width="1.2"/><rect x="803.10" y="363.55" width="7.90" height="25.30" fill="#fff" stroke="#00b800" stroke-width="1.3"/><line x1="819.78" y1="355.0" x2="819.78" y2="390.2" stroke="#00b800" stroke-width="1.2"/><rect x="815.83" y="361.55" width="7.90" height="25.50" fill="#000" stroke="#00b800" stroke-width="1.3"/><line x1="832.51" y1="345.2" x2="832.51" y2="369.6" stroke="#00b800" stroke-width="1.2"/><rect x="828.56" y="349.15" width="7.90" height="13.10" fill="#000" stroke="#00b800" stroke-width="1.3"/><line x1="845.25" y1="345.2" x2="845.25" y2="369.6" stroke="#00b800" stroke-width="1.2"/><rect x="841.30" y="345.85" width="7.90" height="21.10" fill="#fff" stroke="#00b800" stroke-width="1.3"/><line x1="857.98" y1="361.0" x2="857.98" y2="385.8" stroke="#00b800" stroke-width="1.2"/><rect x="854.03" y="363.35" width="7.90" height="3.20" fill="#000" stroke="#00b800" stroke-width="1.3"/><line x1="870.71" y1="351.0" x2="870.71" y2="369.1" stroke="#00b800" stroke-width="1.2"/><rect x="866.76" y="360.85" width="7.90" height="6.10" fill="#fff" stroke="#00b800" stroke-width="1.3"/><line x1="883.44" y1="359.2" x2="883.44" y2="384.1" stroke="#00b800" stroke-width="1.2"/><rect x="879.49" y="367.85" width="7.90" height="11.10" fill="#fff" stroke="#00b800" stroke-width="1.3"/><line x1="896.17" y1="373.4" x2="896.17" y2="393.8" stroke="#00b800" stroke-width="1.2"/><rect x="892.22" y="381.45" width="7.90" height="4.20" fill="#fff" stroke="#00b800" stroke-width="1.3"/><line x1="908.90" y1="373.2" x2="908.90" y2="399.6" stroke="#00b800" stroke-width="1.2"/><rect x="904.95" y="385.65" width="7.90" height="11.20" fill="#fff" stroke="#00b800" stroke-width="1.3"/><line x1="921.63" y1="392.2" x2="921.63" y2="412.0" stroke="#00b800" stroke-width="1.2"/><rect x="917.68" y="398.35" width="7.90" height="11.00" fill="#fff" stroke="#00b800" stroke-width="1.3"/><line x1="934.36" y1="387.2" x2="934.36" y2="422.5" stroke="#00b800" stroke-width="1.2"/><rect x="930.41" y="391.85" width="7.90" height="15.30" fill="#000" stroke="#00b800" stroke-width="1.3"/><line x1="947.09" y1="382.6" x2="947.09" y2="404.7" stroke="#00b800" stroke-width="1.2"/><rect x="943.14" y="398.35" width="7.90" height="3.30" fill="#fff" stroke="#00b800" stroke-width="1.3"/><line x1="985" y1="114.00" x2="988" y2="114.00" stroke="#c8c8c8" stroke-width="1"/><line x1="985" y1="140.17" x2="988" y2="140.17" stroke="#c8c8c8" stroke-width="1"/><line x1="985" y1="172.89" x2="988" y2="172.89" stroke="#c8c8c8" stroke-width="1"/><line x1="985" y1="199.06" x2="988" y2="199.06" stroke="#c8c8c8" stroke-width="1"/><line x1="985" y1="231.77" x2="988" y2="231.77" stroke="#c8c8c8" stroke-width="1"/><line x1="985" y1="257.95" x2="988" y2="257.95" stroke="#c8c8c8" stroke-width="1"/><line x1="985" y1="290.66" x2="988" y2="290.66" stroke="#c8c8c8" stroke-width="1"/><line x1="985" y1="316.83" x2="988" y2="316.83" stroke="#c8c8c8" stroke-width="1"/><line x1="985" y1="349.55" x2="988" y2="349.55" stroke="#c8c8c8" stroke-width="1"/><line x1="985" y1="375.72" x2="988" y2="375.72" stroke="#c8c8c8" stroke-width="1"/><line x1="985" y1="408.44" x2="988" y2="408.44" stroke="#c8c8c8" stroke-width="1"/><line x1="985" y1="434.61" x2="988" y2="434.61" stroke="#c8c8c8" stroke-width="1"/><line x1="5.00" y1="441.8" x2="5.00" y2="444.5" stroke="#c8c8c8" stroke-width="1"/><line x1="55.92" y1="441.8" x2="55.92" y2="444.5" stroke="#c8c8c8" stroke-width="1"/><line x1="106.85" y1="441.8" x2="106.85" y2="444.5" stroke="#c8c8c8" stroke-width="1"/><line x1="157.77" y1="441.8" x2="157.77" y2="444.5" stroke="#c8c8c8" stroke-width="1"/><line x1="208.70" y1="441.8" x2="208.70" y2="444.5" stroke="#c8c8c8" stroke-width="1"/><line x1="259.62" y1="441.8" x2="259.62" y2="444.5" stroke="#c8c8c8" stroke-width="1"/><line x1="310.54" y1="441.8" x2="310.54" y2="444.5" stroke="#c8c8c8" stroke-width="1"/><line x1="361.47" y1="441.8" x2="361.47" y2="444.5" stroke="#c8c8c8" stroke-width="1"/><line x1="412.39" y1="441.8" x2="412.39" y2="444.5" stroke="#c8c8c8" stroke-width="1"/><line x1="463.32" y1="441.8" x2="463.32" y2="444.5" stroke="#c8c8c8" stroke-width="1"/><line x1="514.24" y1="441.8" x2="514.24" y2="444.5" stroke="#c8c8c8" stroke-width="1"/><line x1="565.16" y1="441.8" x2="565.16" y2="444.5" stroke="#c8c8c8" stroke-width="1"/><line x1="616.09" y1="441.8" x2="616.09" y2="444.5" stroke="#c8c8c8" stroke-width="1"/><line x1="667.01" y1="441.8" x2="667.01" y2="444.5" stroke="#c8c8c8" stroke-width="1"/><line x1="717.94" y1="441.8" x2="717.94" y2="444.5" stroke="#c8c8c8" stroke-width="1"/><line x1="768.86" y1="441.8" x2="768.86" y2="444.5" stroke="#c8c8c8" stroke-width="1"/><line x1="819.78" y1="441.8" x2="819.78" y2="444.5" stroke="#c8c8c8" stroke-width="1"/><line x1="870.71" y1="441.8" x2="870.71" y2="444.5" stroke="#c8c8c8" stroke-width="1"/><line x1="921.63" y1="441.8" x2="921.63" y2="444.5" stroke="#c8c8c8" stroke-width="1"/></svg><div class="t" style="left:989.60px;top:109.80px;font-size:8.4px;line-height:8.4px;color:#f0f0f0;transform:scaleX(0.852);">0.91850</div><div class="t" style="left:989.60px;top:135.97px;font-size:8.4px;line-height:8.4px;color:#f0f0f0;transform:scaleX(0.852);">0.91830</div><div class="t" style="left:989.60px;top:168.69px;font-size:8.4px;line-height:8.4px;color:#f0f0f0;transform:scaleX(0.852);">0.91805</div><div class="t" style="left:989.60px;top:194.86px;font-size:8.4px;line-height:8.4px;color:#f0f0f0;transform:scaleX(0.852);">0.91785</div><div class="t" style="left:989.60px;top:227.57px;font-size:8.4px;line-height:8.4px;color:#f0f0f0;transform:scaleX(0.852);">0.91760</div><div class="t" style="left:989.60px;top:253.75px;font-size:8.4px;line-height:8.4px;color:#f0f0f0;transform:scaleX(0.852);">0.91740</div><div class="t" style="left:989.60px;top:286.46px;font-size:8.4px;line-height:8.4px;color:#f0f0f0;transform:scaleX(0.852);">0.91715</div><div class="t" style="left:989.60px;top:312.63px;font-size:8.4px;line-height:8.4px;color:#f0f0f0;transform:scaleX(0.852);">0.91695</div><div class="t" style="left:989.60px;top:345.35px;font-size:8.4px;line-height:8.4px;color:#f0f0f0;transform:scaleX(0.852);">0.91670</div><div class="t" style="left:989.60px;top:371.52px;font-size:8.4px;line-height:8.4px;color:#f0f0f0;transform:scaleX(0.852);">0.91650</div><div class="t" style="left:989.60px;top:404.24px;font-size:8.4px;line-height:8.4px;color:#f0f0f0;transform:scaleX(0.852);">0.91625</div><div class="t" style="left:989.60px;top:430.41px;font-size:8.4px;line-height:8.4px;color:#f0f0f0;transform:scaleX(0.852);">0.91605</div><div style="position:absolute;left:987px;top:398px;width:30.5px;height:8px;background:#fff"></div><div class="t" style="left:989.60px;top:397.70px;font-size:8.4px;line-height:8.4px;color:#000;transform:scaleX(0.852);">0.91630</div><div class="t" style="left:4.40px;top:444.80px;font-size:8.4px;line-height:8.4px;color:#f0f0f0;transform:scaleX(0.878);">14 Nov 2025</div><div class="t" style="left:55.32px;top:444.80px;font-size:8.4px;line-height:8.4px;color:#f0f0f0;transform:scaleX(0.913);">14 Nov 17:50</div><div class="t" style="left:106.25px;top:444.80px;font-size:8.4px;line-height:8.4px;color:#f0f0f0;transform:scaleX(0.913);">14 Nov 18:10</div><div class="t" style="left:157.17px;top:444.80px;font-size:8.4px;line-height:8.4px;color:#f0f0f0;transform:scaleX(0.913);">14 Nov 18:30</div><div class="t" style="left:208.10px;top:444.80px;font-size:8.4px;line-height:8.4px;color:#f0f0f0;transform:scaleX(0.913);">14 Nov 18:50</div><div class="t" style="left:259.02px;top:444.80px;font-size:8.4px;line-height:8.4px;color:#f0f0f0;transform:scaleX(0.913);">14 Nov 19:10</div><div class="t" style="left:309.94px;top:444.80px;font-size:8.4px;line-height:8.4px;color:#f0f0f0;transform:scaleX(0.913);">14 Nov 19:30</div><div class="t" style="left:360.87px;top:444.80px;font-size:8.4px;line-height:8.4px;color:#f0f0f0;transform:scaleX(0.913);">14 Nov 19:50</div><div class="t" style="left:411.79px;top:444.80px;font-size:8.4px;line-height:8.4px;color:#f0f0f0;transform:scaleX(0.913);">14 Nov 20:10</div><div class="t" style="left:462.72px;top:444.80px;font-size:8.4px;line-height:8.4px;color:#f0f0f0;transform:scaleX(0.913);">14 Nov 20:30</div><div class="t" style="left:513.64px;top:444.80px;font-size:8.4px;line-height:8.4px;color:#f0f0f0;transform:scaleX(0.913);">14 Nov 20:50</div><div class="t" style="left:564.56px;top:444.80px;font-size:8.4px;line-height:8.4px;color:#f0f0f0;transform:scaleX(0.913);">14 Nov 21:10</div><div class="t" style="left:615.49px;top:444.80px;font-size:8.4px;line-height:8.4px;color:#f0f0f0;transform:scaleX(0.913);">14 Nov 21:30</div><div class="t" style="left:666.41px;top:444.80px;font-size:8.4px;line-height:8.4px;color:#f0f0f0;transform:scaleX(0.913);">14 Nov 21:50</div><div class="t" style="left:717.34px;top:444.80px;font-size:8.4px;line-height:8.4px;color:#f0f0f0;transform:scaleX(0.913);">14 Nov 22:10</div><div class="t" style="left:768.26px;top:444.80px;font-size:8.4px;line-height:8.4px;color:#f0f0f0;transform:scaleX(0.913);">14 Nov 22:30</div><div class="t" style="left:819.18px;top:444.80px;font-size:8.4px;line-height:8.4px;color:#f0f0f0;transform:scaleX(0.913);">14 Nov 22:50</div><div class="t" style="left:870.11px;top:444.80px;font-size:8.4px;line-height:8.4px;color:#f0f0f0;transform:scaleX(0.913);">14 Nov 23:10</div><div class="t" style="left:921.03px;top:444.80px;font-size:8.4px;line-height:8.4px;color:#f0f0f0;transform:scaleX(0.913);">14 Nov 23:30</div><div class="t" style="left:16.70px;top:89.10px;font-size:8.4px;line-height:8.4px;color:#f0f0f0;transform:scaleX(0.922);">AUDCAD,M5</div><div class="t" style="left:66.80px;top:89.10px;font-size:8.4px;line-height:8.4px;color:#f0f0f0;transform:scaleX(0.881);">0.91633 0.91645 0.91628 0.91630</div><svg style="position:absolute;left:7px;top:91.5px" width="7" height="4"><path d="M0 0 L6 0 L3 3.5Z" fill="#e8e8e8"/></svg><div class="t" style="left:944.00px;top:89.70px;font-size:8.6px;line-height:8.6px;color:#f0f0f0;transform:scaleX(0.917);">EATOP</div><svg style="position:absolute;left:972px;top:91px" width="10" height="10"><circle cx="4.8" cy="4.8" r="4" fill="none" stroke="#ddd" stroke-width="0.9"/><circle cx="3.4" cy="3.8" r="0.6" fill="#ddd"/><circle cx="6.2" cy="3.8" r="0.6" fill="#ddd"/><path d="M2.8 5.6 Q4.8 7.6 6.8 5.6" fill="none" stroke="#ddd" stroke-width="0.8"/></svg><div class="t" style="left:48.00px;top:402.80px;font-size:8.4px;line-height:8.4px;color:#e0e0e0;transform:scaleX(0.933);">buy 0.04</div><div style="position:absolute;left:1px;top:458px;width:1022px;height:4.5px;background:#f0f0f0"></div><div style="position:absolute;left:13px;top:462px;width:1006px;height:128.5px;background:#fff;border-top:1px solid #d0d0d0;border-left:1px solid #d8d8d8;box-sizing:border-box"></div><div style="position:absolute;left:1.5px;top:473px;width:11px;height:135px;background:#c9d9ec"></div><svg style="position:absolute;left:4px;top:466px" width="6" height="6"><path d="M0.5 0.5L5 5M5 0.5L0.5 5" stroke="#222" stroke-width="1.2"/></svg><div class="t" style="left:2px;top:606px;width:36px;height:10px;font-size:8px;line-height:10px;color:#4a5260;transform:rotate(-90deg);transform-origin:0 0;letter-spacing:-0.9px">ターミナル</div><div style="position:absolute;left:13px;top:482.3px;width:1005px;height:1px;background:#e2e2e2"></div><div style="position:absolute;left:13px;top:498px;width:1005px;height:16px;background:#ededed"></div><div style="position:absolute;left:13px;top:498px;width:1005px;height:1px;background:#e0e0e0"></div><div style="position:absolute;left:13px;top:514px;width:1005px;height:1px;background:#e0e0e0"></div><div style="position:absolute;left:13px;top:529.8px;width:1005px;height:15.5px;background:#c8c8c8"></div><div style="position:absolute;left:112px;top:463px;width:1px;height:67px;background:#e4e4e4"></div><div style="position:absolute;left:250px;top:463px;width:1px;height:67px;background:#e4e4e4"></div><div style="position:absolute;left:318px;top:463px;width:1px;height:67px;background:#e4e4e4"></div><div style="position:absolute;left:371px;top:463px;width:1px;height:67px;background:#e4e4e4"></div><div style="position:absolute;left:440px;top:463px;width:1px;height:67px;background:#e4e4e4"></div><div style="position:absolute;left:516px;top:463px;width:1px;height:67px;background:#e4e4e4"></div><div style="position:absolute;left:592.5px;top:463px;width:1px;height:67px;background:#e4e4e4"></div><div style="position:absolute;left:669px;top:463px;width:1px;height:67px;background:#e4e4e4"></div><div style="position:absolute;left:745.5px;top:463px;width:1px;height:67px;background:#e4e4e4"></div><div style="position:absolute;left:822px;top:463px;width:1px;height:67px;background:#e4e4e4"></div><div style="position:absolute;left:898px;top:463px;width:1px;height:67px;background:#e4e4e4"></div><div class="t" style="left:19.00px;top:468.10px;font-size:8.8px;line-height:8.8px;color:#000;-webkit-text-stroke:0.1px #000;transform:scaleX(1.008);">注文番号</div><div class="t" style="right:778.30px;top:468.10px;font-size:8.8px;line-height:8.8px;color:#000;text-align:right;transform-origin:right center;-webkit-text-stroke:0.1px #000;transform:scaleX(0.944);">時間</div><div class="t" style="right:709.00px;top:468.10px;font-size:8.8px;line-height:8.8px;color:#000;text-align:right;transform-origin:right center;-webkit-text-stroke:0.1px #000;transform:scaleX(0.944);">取引種別</div><div class="t" style="right:657.00px;top:468.10px;font-size:8.8px;line-height:8.8px;color:#000;text-align:right;transform-origin:right center;-webkit-text-stroke:0.1px #000;transform:scaleX(0.944);">数量</div><div class="t" style="right:588.00px;top:468.10px;font-size:8.8px;line-height:8.8px;color:#000;text-align:right;transform-origin:right center;-webkit-text-stroke:0.1px #000;transform:scaleX(0.944);">通貨ペア</div><div class="t" style="right:513.00px;top:468.10px;font-size:8.8px;line-height:8.8px;color:#000;text-align:right;transform-origin:right center;-webkit-text-stroke:0.1px #000;transform:scaleX(0.944);">価格</div><div class="t" style="right:434.00px;top:468.10px;font-size:8.8px;line-height:8.8px;color:#000;text-align:right;transform-origin:right center;-webkit-text-stroke:0.1px #000;transform:scaleX(1.054);">決済逆指値(S/...</div><div class="t" style="right:360.00px;top:468.10px;font-size:8.8px;line-height:8.8px;color:#000;text-align:right;transform-origin:right center;-webkit-text-stroke:0.1px #000;transform:scaleX(0.990);">決済指値(T/P)</div><div class="t" style="right:283.50px;top:468.10px;font-size:8.8px;line-height:8.8px;color:#000;text-align:right;transform-origin:right center;-webkit-text-stroke:0.1px #000;transform:scaleX(0.944);">価格</div><div class="t" style="right:207.00px;top:468.10px;font-size:8.8px;line-height:8.8px;color:#000;text-align:right;transform-origin:right center;-webkit-text-stroke:0.1px #000;transform:scaleX(0.963);">手数料</div><div class="t" style="right:130.00px;top:468.10px;font-size:8.8px;line-height:8.8px;color:#000;text-align:right;transform-origin:right center;-webkit-text-stroke:0.1px #000;transform:scaleX(0.833);">スワップ</div><div class="t" style="right:10.00px;top:468.10px;font-size:8.8px;line-height:8.8px;color:#000;text-align:right;transform-origin:right center;-webkit-text-stroke:0.1px #000;transform:scaleX(0.944);">損益</div><svg style="position:absolute;left:65px;top:469px" width="6" height="9"><path d="M1.2 7.5L4.2 1" stroke="#888" stroke-width="0.9"/></svg><div class="t" style="right:776.50px;top:484.75px;font-size:9.7px;line-height:9.7px;color:#111;text-align:right;transform-origin:right center;transform:scaleX(0.887);-webkit-text-stroke:0.15px #111;">2025.10.23 09:32:00</div><div class="t" style="right:708.40px;top:484.75px;font-size:9.7px;line-height:9.7px;color:#111;text-align:right;transform-origin:right center;transform:scaleX(0.887);-webkit-text-stroke:0.15px #111;">sell</div><div class="t" style="right:654.70px;top:484.75px;font-size:9.7px;line-height:9.7px;color:#111;text-align:right;transform-origin:right center;transform:scaleX(0.887);-webkit-text-stroke:0.15px #111;">0.04</div><div class="t" style="right:587.40px;top:484.75px;font-size:9.7px;line-height:9.7px;color:#111;text-align:right;transform-origin:right center;transform:scaleX(0.887);-webkit-text-stroke:0.15px #111;">audcad</div><div class="t" style="right:510.10px;top:484.75px;font-size:9.7px;line-height:9.7px;color:#111;text-align:right;transform-origin:right center;transform:scaleX(0.887);-webkit-text-stroke:0.15px #111;">0.90936</div><div class="t" style="right:434.30px;top:484.75px;font-size:9.7px;line-height:9.7px;color:#111;text-align:right;transform-origin:right center;transform:scaleX(0.887);-webkit-text-stroke:0.15px #111;">0.00000</div><div class="t" style="right:357.40px;top:484.75px;font-size:9.7px;line-height:9.7px;color:#111;text-align:right;transform-origin:right center;transform:scaleX(0.887);-webkit-text-stroke:0.15px #111;">0.00000</div><div class="t" style="right:280.80px;top:484.75px;font-size:9.7px;line-height:9.7px;color:#111;text-align:right;transform-origin:right center;transform:scaleX(0.887);-webkit-text-stroke:0.15px #111;">0.91646</div><div class="t" style="right:204.60px;top:484.75px;font-size:9.7px;line-height:9.7px;color:#111;text-align:right;transform-origin:right center;transform:scaleX(0.887);-webkit-text-stroke:0.15px #111;">-66</div><div class="t" style="right:128.30px;top:484.75px;font-size:9.7px;line-height:9.7px;color:#111;text-align:right;transform-origin:right center;transform:scaleX(0.887);-webkit-text-stroke:0.15px #111;">-574</div><div class="t" style="right:23.20px;top:484.75px;font-size:9.7px;line-height:9.7px;color:#111;text-align:right;transform-origin:right center;transform:scaleX(0.887);-webkit-text-stroke:0.15px #111;">-3 132</div><svg style="position:absolute;left:1007.5px;top:486.6px" width="7" height="7"><path d="M0.8 0.8L5.6 5.6M5.6 0.8L0.8 5.6" stroke="#9a9a9a" stroke-width="1.3"/></svg><svg style="position:absolute;left:16px;top:483.1px" width="12" height="13"><path d="M1 1h5.5l2.8 2.8v7.7h-8.3z" fill="#fafafa" stroke="#888" stroke-width="0.9"/><circle cx="8" cy="9.5" r="2.9" fill="#e04a2a"/></svg><div class="t" style="right:776.50px;top:500.45px;font-size:9.7px;line-height:9.7px;color:#111;text-align:right;transform-origin:right center;transform:scaleX(0.887);-webkit-text-stroke:0.15px #111;">2025.10.27 00:15:00</div><div class="t" style="right:708.40px;top:500.45px;font-size:9.7px;line-height:9.7px;color:#111;text-align:right;transform-origin:right center;transform:scaleX(0.887);-webkit-text-stroke:0.15px #111;">sell</div><div class="t" style="right:654.70px;top:500.45px;font-size:9.7px;line-height:9.7px;color:#111;text-align:right;transform-origin:right center;transform:scaleX(0.887);-webkit-text-stroke:0.15px #111;">0.08</div><div class="t" style="right:587.40px;top:500.45px;font-size:9.7px;line-height:9.7px;color:#111;text-align:right;transform-origin:right center;transform:scaleX(0.887);-webkit-text-stroke:0.15px #111;">audcad</div><div class="t" style="right:510.10px;top:500.45px;font-size:9.7px;line-height:9.7px;color:#111;text-align:right;transform-origin:right center;transform:scaleX(0.887);-webkit-text-stroke:0.15px #111;">0.91552</div><div class="t" style="right:434.30px;top:500.45px;font-size:9.7px;line-height:9.7px;color:#111;text-align:right;transform-origin:right center;transform:scaleX(0.887);-webkit-text-stroke:0.15px #111;">0.00000</div><div class="t" style="right:357.40px;top:500.45px;font-size:9.7px;line-height:9.7px;color:#111;text-align:right;transform-origin:right center;transform:scaleX(0.887);-webkit-text-stroke:0.15px #111;">0.00000</div><div class="t" style="right:280.80px;top:500.45px;font-size:9.7px;line-height:9.7px;color:#111;text-align:right;transform-origin:right center;transform:scaleX(0.887);-webkit-text-stroke:0.15px #111;">0.91646</div><div class="t" style="right:204.60px;top:500.45px;font-size:9.7px;line-height:9.7px;color:#111;text-align:right;transform-origin:right center;transform:scaleX(0.887);-webkit-text-stroke:0.15px #111;">-132</div><div class="t" style="right:128.30px;top:500.45px;font-size:9.7px;line-height:9.7px;color:#111;text-align:right;transform-origin:right center;transform:scaleX(0.887);-webkit-text-stroke:0.15px #111;">-1 050</div><div class="t" style="right:23.20px;top:500.45px;font-size:9.7px;line-height:9.7px;color:#111;text-align:right;transform-origin:right center;transform:scaleX(0.887);-webkit-text-stroke:0.15px #111;">-830</div><svg style="position:absolute;left:1007.5px;top:502.3px" width="7" height="7"><path d="M0.8 0.8L5.6 5.6M5.6 0.8L0.8 5.6" stroke="#9a9a9a" stroke-width="1.3"/></svg><svg style="position:absolute;left:16px;top:498.8px" width="12" height="13"><path d="M1 1h5.5l2.8 2.8v7.7h-8.3z" fill="#fafafa" stroke="#888" stroke-width="0.9"/><circle cx="8" cy="9.5" r="2.9" fill="#e04a2a"/></svg><div class="t" style="right:776.50px;top:516.15px;font-size:9.7px;line-height:9.7px;color:#111;text-align:right;transform-origin:right center;transform:scaleX(0.887);-webkit-text-stroke:0.15px #111;">2025.11.04 08:00:00</div><div class="t" style="right:708.40px;top:516.15px;font-size:9.7px;line-height:9.7px;color:#111;text-align:right;transform-origin:right center;transform:scaleX(0.887);-webkit-text-stroke:0.15px #111;">buy</div><div class="t" style="right:654.70px;top:516.15px;font-size:9.7px;line-height:9.7px;color:#111;text-align:right;transform-origin:right center;transform:scaleX(0.887);-webkit-text-stroke:0.15px #111;">0.04</div><div class="t" style="right:587.40px;top:516.15px;font-size:9.7px;line-height:9.7px;color:#111;text-align:right;transform-origin:right center;transform:scaleX(0.887);-webkit-text-stroke:0.15px #111;">audcad</div><div class="t" style="right:510.10px;top:516.15px;font-size:9.7px;line-height:9.7px;color:#111;text-align:right;transform-origin:right center;transform:scaleX(0.887);-webkit-text-stroke:0.15px #111;">0.91623</div><div class="t" style="right:434.30px;top:516.15px;font-size:9.7px;line-height:9.7px;color:#111;text-align:right;transform-origin:right center;transform:scaleX(0.887);-webkit-text-stroke:0.15px #111;">0.00000</div><div class="t" style="right:357.40px;top:516.15px;font-size:9.7px;line-height:9.7px;color:#111;text-align:right;transform-origin:right center;transform:scaleX(0.887);-webkit-text-stroke:0.15px #111;">0.00000</div><div class="t" style="right:280.80px;top:516.15px;font-size:9.7px;line-height:9.7px;color:#111;text-align:right;transform-origin:right center;transform:scaleX(0.887);-webkit-text-stroke:0.15px #111;">0.91626</div><div class="t" style="right:204.60px;top:516.15px;font-size:9.7px;line-height:9.7px;color:#111;text-align:right;transform-origin:right center;transform:scaleX(0.887);-webkit-text-stroke:0.15px #111;">-66</div><div class="t" style="right:128.30px;top:516.15px;font-size:9.7px;line-height:9.7px;color:#111;text-align:right;transform-origin:right center;transform:scaleX(0.887);-webkit-text-stroke:0.15px #111;">10</div><div class="t" style="right:23.20px;top:516.15px;font-size:9.7px;line-height:9.7px;color:#111;text-align:right;transform-origin:right center;transform:scaleX(0.887);-webkit-text-stroke:0.15px #111;">14</div><svg style="position:absolute;left:1007.5px;top:518.0px" width="7" height="7"><path d="M0.8 0.8L5.6 5.6M5.6 0.8L0.8 5.6" stroke="#9a9a9a" stroke-width="1.3"/></svg><svg style="position:absolute;left:16px;top:514.5px" width="12" height="13"><path d="M1 1h5.5l2.8 2.8v7.7h-8.3z" fill="#fafafa" stroke="#888" stroke-width="0.9"/><circle cx="8" cy="9.5" r="2.9" fill="#3a8ae0"/></svg><div style="position:absolute;left:32px;top:506px;width:37px;height:5px;background:#e4e8ee;filter:blur(1px)"></div><svg style="position:absolute;left:16px;top:532.5px" width="10" height="11"><rect x="0.5" y="0.5" width="9" height="9.5" fill="#fafafa" stroke="#999" stroke-width="0.9"/><path d="M5 2v4.5 M2.8 4.8l2.2 2.4 2.2-2.4" stroke="#d83020" stroke-width="1.6" fill="none"/></svg><div class="t" style="left:31.40px;top:532.70px;font-size:9.8px;line-height:9.8px;color:#111;-webkit-text-stroke:0.35px #111;transform:scaleX(0.950);">残高: 294 624 JPY&nbsp; 有効証拠金: 288 798&nbsp; 必要証拠金: 2 397&nbsp; 余剰証拠金: 286 401&nbsp; 証拠金維持率: 12049.56%</div><div class="t" style="right:24.20px;top:532.70px;font-size:9.8px;line-height:9.8px;color:#111;text-align:right;transform-origin:right center;-webkit-text-stroke:0.35px #111;transform:scaleX(0.990);">-5 826</div><div style="position:absolute;left:50px;top:590px;width:970px;height:1px;background:#4a4a4a"></div><div style="position:absolute;left:13px;top:606px;width:1007px;height:4px;background:#f4f8f4"></div><div style="position:absolute;left:1px;top:610px;width:1022px;height:1px;background:#a8a8a8"></div><svg style="position:absolute;left:0;top:585px" width="1024" height="25"><path d="M15 20.8 V7.5 L17.5 5 H49.8 V20.8 Z" fill="#fff"/><path d="M15.5 5 V20.8 H49.8 V5.5 H1020" fill="none" stroke="#4a4a4a" stroke-width="1"/></svg><div class="t" style="left:24.00px;top:593.60px;font-size:9.4px;line-height:9.4px;color:#000;-webkit-text-stroke:0.25px #000;transform:scaleX(0.928);">取引</div><div class="t" style="left:59.00px;top:592.80px;font-size:9.2px;line-height:9.2px;color:#555;transform:scaleX(1.028);">運用比率</div><div class="t" style="left:113.00px;top:592.80px;font-size:9.2px;line-height:9.2px;color:#555;transform:scaleX(1.036);">口座履歴</div><div class="t" style="left:166.60px;top:592.80px;font-size:9.2px;line-height:9.2px;color:#555;transform:scaleX(0.750);">ニュース</div><div class="t" style="left:209.80px;top:592.80px;font-size:9.2px;line-height:9.2px;color:#555;transform:scaleX(0.837);">アラーム設定</div><div class="t" style="left:271.60px;top:592.80px;font-size:9.2px;line-height:9.2px;color:#555;transform:scaleX(0.783);">メールボックス</div><div class="t" style="left:345.30px;top:592.80px;font-size:9.2px;line-height:9.2px;color:#555;transform:scaleX(0.733);">マーケット</div><div class="t" style="left:407.70px;top:592.80px;font-size:9.2px;line-height:9.2px;color:#555;transform:scaleX(0.811);">シグナル</div><div class="t" style="left:453.30px;top:592.80px;font-size:9.2px;line-height:9.2px;color:#555;transform:scaleX(1.067);">記事</div><div class="t" style="left:488.00px;top:592.80px;font-size:9.2px;line-height:9.2px;color:#555;transform:scaleX(0.749);">ライブラリ</div><div class="t" style="left:538.00px;top:592.80px;font-size:9.2px;line-height:9.2px;color:#555;transform:scaleX(0.787);">エキスパート</div><div class="t" style="left:596.30px;top:592.80px;font-size:9.2px;line-height:9.2px;color:#555;transform:scaleX(1.042);">操作履歴</div><div style="position:absolute;left:104.2px;top:593px;width:1px;height:11px;background:#9a9a9a"></div><div style="position:absolute;left:158.0px;top:593px;width:1px;height:11px;background:#9a9a9a"></div><div style="position:absolute;left:200.8px;top:593px;width:1px;height:11px;background:#9a9a9a"></div><div style="position:absolute;left:263.0px;top:593px;width:1px;height:11px;background:#9a9a9a"></div><div style="position:absolute;left:337.0px;top:593px;width:1px;height:11px;background:#9a9a9a"></div><div style="position:absolute;left:399.0px;top:593px;width:1px;height:11px;background:#9a9a9a"></div><div style="position:absolute;left:445.5px;top:593px;width:1px;height:11px;background:#9a9a9a"></div><div style="position:absolute;left:480.2px;top:593px;width:1px;height:11px;background:#9a9a9a"></div><div style="position:absolute;left:530.2px;top:593px;width:1px;height:11px;background:#9a9a9a"></div><div style="position:absolute;left:588.2px;top:593px;width:1px;height:11px;background:#9a9a9a"></div><div style="position:absolute;left:641.5px;top:593px;width:1px;height:11px;background:#9a9a9a"></div><div class="t" style="left:322.00px;top:597.40px;font-size:8.4px;line-height:8.4px;color:#e82020;-webkit-text-stroke:0.25px #e82020;transform:scaleX(0.793);">17</div><div class="t" style="left:380.00px;top:597.40px;font-size:8.4px;line-height:8.4px;color:#e82020;-webkit-text-stroke:0.25px #e82020;transform:scaleX(0.837);">105</div><div class="t" style="left:2.50px;top:615.40px;font-size:9.2px;line-height:9.2px;color:#000;-webkit-text-stroke:0.2px #000;transform:scaleX(0.865);">F1キーでヘルプが表示されます</div><div style="position:absolute;left:457.5px;top:613.5px;width:1px;height:15px;background:#d0d0d0"></div><div style="position:absolute;left:550.4px;top:613.5px;width:1px;height:15px;background:#d0d0d0"></div><div style="position:absolute;left:631.4px;top:613.5px;width:1px;height:15px;background:#d0d0d0"></div><div style="position:absolute;left:687.4px;top:613.5px;width:1px;height:15px;background:#d0d0d0"></div><div style="position:absolute;left:744.5px;top:613.5px;width:1px;height:15px;background:#d0d0d0"></div><div style="position:absolute;left:798.2px;top:613.5px;width:1px;height:15px;background:#d0d0d0"></div><div style="position:absolute;left:853px;top:613.5px;width:1px;height:15px;background:#d0d0d0"></div><div style="position:absolute;left:905px;top:613.5px;width:1px;height:15px;background:#d0d0d0"></div><div class="t" style="left:462.70px;top:615.60px;font-size:9.8px;line-height:9.8px;color:#000;-webkit-text-stroke:0.15px #000;transform:scaleX(0.966);">Default</div><svg style="position:absolute;left:910px;top:615.5px" width="20" height="11"><rect x="0.0" y="0" width="1.6" height="10.3" fill="#78a838"/><rect x="0.0" y="8.25" width="1.6" height="2.05" fill="#1d5d8a"/><rect x="2.4" y="0" width="1.6" height="10.3" fill="#b0a060"/><rect x="2.4" y="7.20" width="1.6" height="3.10" fill="#1d5d8a"/><rect x="4.8" y="0" width="1.6" height="10.3" fill="#78a838"/><rect x="4.8" y="6.15" width="1.6" height="4.15" fill="#1d5d8a"/><rect x="7.2" y="0" width="1.6" height="10.3" fill="#b0a060"/><rect x="7.2" y="5.10" width="1.6" height="5.20" fill="#1d5d8a"/><rect x="9.6" y="0" width="1.6" height="10.3" fill="#78a838"/><rect x="9.6" y="4.05" width="1.6" height="6.25" fill="#1d5d8a"/><rect x="12.0" y="0" width="1.6" height="10.3" fill="#b0a060"/><rect x="12.0" y="3.00" width="1.6" height="7.30" fill="#1d5d8a"/><rect x="14.4" y="0" width="1.6" height="10.3" fill="#78a838"/><rect x="14.4" y="1.95" width="1.6" height="8.35" fill="#1d5d8a"/><rect x="16.8" y="0" width="1.6" height="10.3" fill="#b0a060"/><rect x="16.8" y="0.90" width="1.6" height="9.40" fill="#1d5d8a"/></svg><div class="t" style="left:932.00px;top:615.70px;font-size:9.6px;line-height:9.6px;color:#000;-webkit-text-stroke:0.15px #000;transform:scaleX(0.927);">1545439/909 kb</div><svg style="position:absolute;left:1011px;top:617px" width="12" height="12"><path d="M11 3L3 11 M11 6L6 11 M11 9L9 11" stroke="#aaa" stroke-width="0.9"/></svg><div style="position:absolute;left:0px;top:0px;width:1px;height:630px;background:#3b4653"></div><div style="position:absolute;left:1023px;top:0px;width:1px;height:630px;background:#4d6478"></div><div style="position:absolute;left:0px;top:0px;width:1024px;height:1px;background:#3b4653"></div><div style="position:absolute;left:0px;top:629px;width:1024px;height:1px;background:#3b4653"></div>
</body></html>
